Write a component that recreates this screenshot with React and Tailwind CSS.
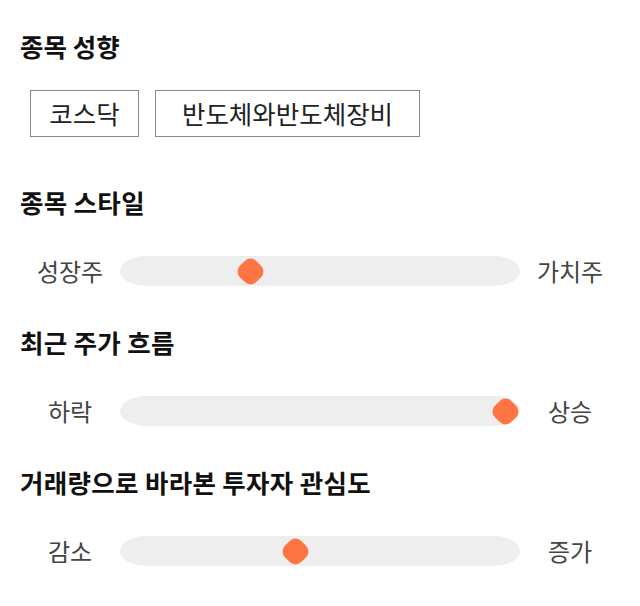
import React from 'react';

const sliders = [
  { title: '종목 스타일', left: '성장주', right: '가치주', pos: 130 },
  { title: '최근 주가 흐름', left: '하락', right: '상승', pos: 385 },
  { title: '거래량으로 바라본 투자자 관심도', left: '감소', right: '증가', pos: 175 },
];

function Slider({ left, right, pos }) {
  return (
    <div className="flex items-center h-[30px]">
      <div className="w-[100px] text-center text-[24px] leading-8 text-[#444]">{left}</div>
      <div className="relative w-[400px] h-[30px] bg-[#eeeeee] rounded-[26px/15px]">
        {/* thumb sits over the track at its value */}
        <div
          className="absolute top-1/2 w-[23px] h-[23px] -ml-[11.5px] -mt-[11.5px] bg-[#ff7443] rounded-[8px] rotate-45"
          style={{ left: pos }}
        />
      </div>
      <div className="w-[100px] text-center text-[24px] leading-8 text-[#444]">{right}</div>
    </div>
  );
}

export default function App() {
  return (
    <div
      className="w-[640px] h-[606px] bg-white px-5 pt-[30px]"
      style={{ fontFamily: '"Noto Sans CJK KR", "Noto Sans", sans-serif' }}
    >
      <h2 className="text-[25.5px] leading-8 font-bold text-[#111]">종목 성향</h2>
      <div className="flex gap-4 mt-7 ml-[10px]">
        <div className="h-[47px] w-[109px] flex items-center justify-center border border-[#888] text-[25.5px] text-[#222]">코스닥</div>
        <div className="h-[47px] w-[265px] flex items-center justify-center border border-[#888] text-[25.5px] text-[#222]">반도체와반도체장비</div>
      </div>

      <div className="mt-[49px] flex flex-col gap-10">
        {sliders.map((s) => (
          <div key={s.title} className="flex flex-col gap-[38px]">
            <h2 className="text-[25.5px] leading-8 font-bold text-[#111] tracking-[0.3px]">{s.title}</h2>
            <Slider left={s.left} right={s.right} pos={s.pos} />
          </div>
        ))}
      </div>
    </div>
  );
}
